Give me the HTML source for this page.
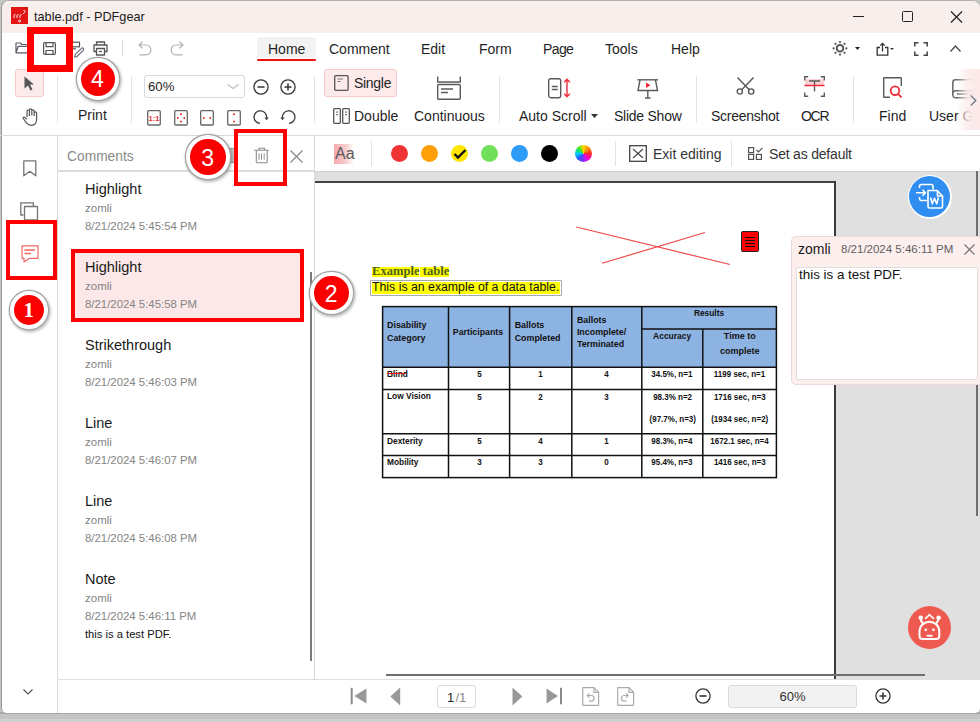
<!DOCTYPE html>
<html><head><meta charset="utf-8">
<style>
*{margin:0;padding:0;box-sizing:border-box}
html,body{width:980px;height:722px;overflow:hidden;background:#c4c4c4;font-family:"Liberation Sans",sans-serif;color:#1f1f1f;position:relative}
.a{position:absolute}
.t{position:absolute;white-space:nowrap;line-height:1}
.sep{position:absolute;width:1px;background:#e3e3e3}
.hl{position:absolute;height:1px;background:#e6e6e6}
svg{position:absolute;overflow:visible}
.badge{position:absolute;border-radius:50%;background:#fb0000;border:4px solid #fff;box-shadow:0 0 0.5px 1.3px #a4a4a4,1px 1.5px 3px 1.5px rgba(0,0,0,.28);color:#fff;text-align:center;line-height:1}
.rbox{position:absolute;border:4px solid #ff0000}
.tab{font-size:14px;color:#1f1f1f}
.lbl{font-size:14px;color:#1f1f1f}
.ci{position:absolute;width:17px;height:17px;border-radius:50%;top:145px}
.it{font-size:14.5px;color:#1a1a1a}
.iu{font-size:11.5px;color:#848484}
.id{font-size:11.4px;color:#848484}
.tb{font-size:9px;font-weight:bold;color:#111}
</style></head><body>
<!-- window frame -->
<div class="a" style="left:0;top:712px;width:980px;height:2px;background:#a8a8a8"></div>
<div class="a" style="left:0;top:719px;width:980px;height:3px;background:#d0d0d0"></div>
<div class="a" style="left:1px;top:0;width:979px;height:713px;background:#fff;border-radius:8px 8px 5px 5px;border-left:1px solid #9a9a9a;border-top:1px solid #b0b0b0;overflow:hidden">
  <div class="a" style="left:0;top:0;width:980px;height:32px;background:#f8eeec"></div>
</div>

<!-- ============ TITLE BAR ============ -->
<div class="a" style="left:11px;top:7px;width:17px;height:17px;background:#e21414"></div>
<svg style="left:11px;top:7px" width="17" height="17"><g fill="none" stroke="#fff" stroke-width="0.9"><path d="M3 11V8.2c.4-.6 1-.7 1.5-.5M6 11V8.2c.4-.6 1-.7 1.5-.5M9 11V8.2c.4-.6 1-.7 1.5-.5"/><path d="M12.5 3.5c1.2-.3 2 .5 1.6 1.5-.4.9-1.5 1.3-2.3 2"/><circle cx="8.5" cy="14" r="1"/></g></svg>
<div class="t" style="left:34px;top:11px;font-size:12.7px;color:#1a1a1a">table.pdf - PDFgear</div>
<div class="a" style="left:853px;top:16px;width:11px;height:1.2px;background:#222"></div>
<div class="a" style="left:902px;top:11px;width:10.5px;height:10.5px;border:1.6px solid #222;border-radius:1.5px"></div>
<svg style="left:950px;top:10.5px" width="13" height="12"><path d="M1 0.5 L12 11.5 M12 0.5 L1 11.5" stroke="#222" stroke-width="1.2"/></svg>

<!-- ============ ROW 1 : quick access + tabs ============ -->
<svg style="left:15px;top:42px" width="16" height="13"><path d="M1 10.8V1h4.3l1.5 1.5h6.5V3.6M1 10.8l2.3-6.5h12L13 10.8z" fill="none" stroke="#5a5a6a" stroke-width="1.2" stroke-linejoin="round"/></svg>
<svg style="left:43px;top:42px" width="13" height="13"><g fill="none" stroke="#555" stroke-width="1.2"><rect x="0.6" y="0.6" width="11.8" height="11.8" rx="1.2"/><path d="M3 0.6v4h7v-4M3 12.4V8.5h7v3.9"/></g></svg>
<svg style="left:70px;top:40px" width="14" height="17"><g fill="none" stroke="#555" stroke-width="1.2"><rect x="0" y="2.2" width="9.5" height="4.6"/><path d="M0 8.8h6"/><path d="M5.2 14.6l6.3-6.3a1.3 1.3 0 0 1 1.9 1.9l-6.3 6.3-2.4.6z" stroke="#667" stroke-width="1.1"/></g></svg>
<svg style="left:93px;top:41px" width="15" height="15"><g fill="none" stroke="#555" stroke-width="1.3" stroke-linejoin="round"><path d="M3.5 4V1h8v3"/><path d="M3.5 10.5H1V4h13v6.5h-2.5"/><rect x="3.5" y="7.5" width="8" height="6.5"/><path d="M6 10.5h3"/></g></svg>
<div class="sep" style="left:122px;top:40px;height:16px;background:#dcdcdc"></div>
<svg style="left:138px;top:41px" width="14" height="15"><path d="M4.5 0.8L1 4l3.5 3.2M1 4h7a4.5 4.5 0 0 1 0 9.8H1.5" fill="none" stroke="#b2b2b2" stroke-width="1.2"/></svg>
<svg style="left:170px;top:41px" width="14" height="15"><path d="M9.5 0.8L13 4l-3.5 3.2M13 4H6a4.5 4.5 0 0 0 0 9.8h6.5" fill="none" stroke="#b2b2b2" stroke-width="1.2"/></svg>

<div class="a" style="left:257px;top:37px;width:59px;height:21px;background:#f3f3f3;border-radius:4px 4px 0 0"></div>
<div class="a" style="left:257px;top:59px;width:59px;height:2px;background:#f01010;border-radius:1px"></div>
<div class="t tab" style="left:268px;top:42px">Home</div>
<div class="t tab" style="left:329px;top:42px">Comment</div>
<div class="t tab" style="left:421px;top:42px">Edit</div>
<div class="t tab" style="left:479px;top:42px">Form</div>
<div class="t tab" style="left:543px;top:42px;letter-spacing:-0.6px">Page</div>
<div class="t tab" style="left:605px;top:42px">Tools</div>
<div class="t tab" style="left:671px;top:42px">Help</div>

<svg style="left:832px;top:41px" width="16" height="15"><g fill="#555"><circle cx="8" cy="7.3" r="3.3" fill="none" stroke="#555" stroke-width="1.9"/><circle cx="8" cy="1" r="1.1"/><circle cx="8" cy="13.6" r="1.1"/><circle cx="1.6" cy="7.3" r="1.1"/><circle cx="14.4" cy="7.3" r="1.1"/><circle cx="3.5" cy="2.8" r="1.1"/><circle cx="12.5" cy="2.8" r="1.1"/><circle cx="3.5" cy="11.8" r="1.1"/><circle cx="12.5" cy="11.8" r="1.1"/></g></svg>
<svg style="left:855px;top:47px" width="5" height="3"><path d="M0 0h5l-2.5 3z" fill="#222"/></svg>
<svg style="left:876px;top:42px" width="13" height="14"><g fill="none" stroke="#333" stroke-width="1.3"><path d="M4 5.5H1.2v7.6h10.6V5.5H9"/><path d="M6.5 9.5V1.5M4.2 3.6l2.3-2.3 2.3 2.3"/></g></svg>
<svg style="left:890px;top:48px" width="4" height="2"><path d="M0 0h4l-2 2z" fill="#333"/></svg>
<svg style="left:914px;top:42px" width="14" height="14"><path d="M0.8 4.5V0.8h3.7M9.5 0.8h3.7v3.7M13.2 9.5v3.7H9.5M4.5 13.2H0.8V9.5" fill="none" stroke="#444" stroke-width="1.5"/></svg>
<svg style="left:950px;top:45px" width="11" height="7"><path d="M0.5 6.5L5.5 1l5 5.5" fill="none" stroke="#444" stroke-width="1.2"/></svg>

<!-- ============ ROW 2 : ribbon ============ -->
<div class="a" style="left:15px;top:69px;width:29px;height:28px;background:#fdeaea;border:1px solid #f7caca;border-radius:3px"></div>
<svg style="left:24px;top:76px" width="11" height="15"><path d="M0.5 0.5L10 8.5H6l2.5 5-2 1-2.5-5L0.5 12.5z" fill="#555"/></svg>
<svg style="left:22px;top:108px" width="17" height="18"><path d="M5 9V3.2a1.2 1.2 0 0 1 2.4 0V8M7.4 7.5V2a1.2 1.2 0 0 1 2.4 0v5.5M9.8 7.5V3a1.2 1.2 0 0 1 2.4 0v5M12.2 8V5a1.2 1.2 0 0 1 2.4 0v6.5c0 3.5-2.2 5.8-5.5 5.8-2.2 0-3.6-1-4.8-2.6L1.2 10.5c-.5-.8.4-1.8 1.3-1.2L5 11.2" fill="none" stroke="#555" stroke-width="1.2" stroke-linejoin="round"/></svg>
<div class="sep" style="left:57px;top:76px;height:47px"></div>
<div class="t lbl" style="left:78px;top:108px">Print</div>
<div class="sep" style="left:131px;top:76px;height:47px"></div>

<div class="a" style="left:144px;top:75px;width:101px;height:23px;border:1px solid #d9d9d9;border-radius:3px"></div>
<div class="t" style="left:148px;top:80px;font-size:13.2px">60%</div>
<svg style="left:227px;top:84px" width="12" height="5"><path d="M0.5 0.5l5.5 4 5.5-4" fill="none" stroke="#bdbdbd" stroke-width="1.1"/></svg>
<svg style="left:253px;top:79px" width="16" height="16"><circle cx="8" cy="8" r="7.1" fill="none" stroke="#333" stroke-width="1.3"/><path d="M4.5 8h7" stroke="#333" stroke-width="1.5"/></svg>
<svg style="left:280px;top:79px" width="16" height="16"><circle cx="8" cy="8" r="7.1" fill="none" stroke="#333" stroke-width="1.3"/><path d="M4.5 8h7M8 4.5v7" stroke="#333" stroke-width="1.5"/></svg>

<svg style="left:147px;top:110px" width="14" height="16"><rect x="0.7" y="0.7" width="12.6" height="14.3" rx="1" fill="none" stroke="#666" stroke-width="1.3"/><text x="7" y="11" font-size="7.5" font-family="Liberation Sans" font-weight="bold" fill="#f03030" text-anchor="middle">1:1</text></svg>
<svg style="left:174px;top:110px" width="14" height="16"><rect x="0.7" y="0.7" width="12.6" height="14.3" rx="1" fill="none" stroke="#666" stroke-width="1.3"/><g fill="#f03030"><rect x="6" y="3.5" width="2" height="1.5"/><rect x="6" y="10.8" width="2" height="1.5"/><rect x="3" y="7" width="1.5" height="2"/><rect x="9.5" y="7" width="1.5" height="2"/></g></svg>
<svg style="left:200px;top:110px" width="14" height="16"><rect x="0.7" y="0.7" width="12.6" height="14.3" rx="1" fill="none" stroke="#666" stroke-width="1.3"/><g fill="#f03030"><rect x="3" y="7" width="1.5" height="2"/><rect x="9.5" y="7" width="1.5" height="2"/></g></svg>
<svg style="left:227px;top:110px" width="14" height="16"><rect x="0.7" y="0.7" width="12.6" height="14.3" rx="1" fill="none" stroke="#666" stroke-width="1.3"/><g fill="#f03030"><rect x="6" y="3.5" width="2" height="1.5"/><rect x="6" y="10.8" width="2" height="1.5"/></g></svg>
<svg style="left:253px;top:110px" width="16" height="15"><path d="M7 13.4A6.3 6.3 0 1 1 13.6 7.8" fill="none" stroke="#444" stroke-width="1.4"/><path d="M11.4 7.6h4.4l-2.2 2.6z" fill="#444"/></svg>
<svg style="left:281px;top:110px" width="16" height="15"><path d="M8 13.4A6.3 6.3 0 1 0 1.4 7.8" fill="none" stroke="#444" stroke-width="1.4"/><path d="M-0.8 7.6h4.4L1.4 10.2z" fill="#444"/></svg>
<div class="sep" style="left:314px;top:76px;height:47px"></div>

<div class="a" style="left:324px;top:69px;width:73px;height:28px;background:#fdeaea;border:1px solid #f7caca;border-radius:3px"></div>
<svg style="left:334px;top:75px" width="15" height="16"><rect x="0.7" y="0.7" width="13.4" height="14.6" rx="1" fill="none" stroke="#555" stroke-width="1.3"/><path d="M3.5 4h5.5M3.5 6.5h3" stroke="#777" stroke-width="1.2"/></svg>
<div class="t lbl" style="left:354px;top:76px;letter-spacing:-0.3px">Single</div>
<svg style="left:333px;top:108px" width="17" height="16"><g fill="none" stroke="#555" stroke-width="1.3"><rect x="0.7" y="0.7" width="6.6" height="14.6" rx="0.8"/><rect x="9.7" y="0.7" width="6.6" height="14.6" rx="0.8"/></g><g fill="#777"><rect x="3" y="3.5" width="2" height="1.2"/><rect x="3" y="6" width="2" height="1.2"/><rect x="12" y="3.5" width="2" height="1.2"/><rect x="12" y="6" width="2" height="1.2"/></g></svg>
<div class="t lbl" style="left:354px;top:109px">Double</div>
<svg style="left:437px;top:76px" width="24" height="24"><g fill="none" stroke="#5a5a5a" stroke-width="1.4"><path d="M0.7 0.5v5.5h22.6V0.5"/><rect x="0.7" y="8.5" width="22.6" height="14.8" rx="1"/><path d="M4 13h12M4 16.5h7"/></g></svg>
<div class="t lbl" style="left:414px;top:109px">Continuous</div>
<div class="sep" style="left:499px;top:76px;height:47px"></div>

<svg style="left:548px;top:78px" width="24" height="21"><rect x="0.7" y="0.7" width="12" height="19" rx="2" fill="none" stroke="#5a5a5a" stroke-width="1.4"/><path d="M3.8 8.5h6M3.8 11.5h6" stroke="#5a5a5a" stroke-width="1.3"/><path d="M19 1.5v17M16.2 4.2L19 1.2l2.8 3M16.2 15.8L19 18.8l2.8-3" fill="none" stroke="#f02a3a" stroke-width="1.4"/></svg>
<div class="t lbl" style="left:519px;top:109px">Auto Scroll</div>
<svg style="left:591px;top:114px" width="7" height="4"><path d="M0 0h7l-3.5 4z" fill="#333"/></svg>
<svg style="left:637px;top:79px" width="22" height="21"><g fill="none" stroke="#5a5a5a" stroke-width="1.4"><path d="M0.5 0.8h20.5"/><path d="M3 1l-2 10.5h19.5l-2-10.5"/><path d="M10.8 11.5v7M8 19h5.5"/></g><path d="M9 3.5l4.5 2.8L9 9z" fill="#f02a3a"/></svg>
<div class="t lbl" style="left:614px;top:109px;letter-spacing:-0.25px">Slide Show</div>
<div class="sep" style="left:696px;top:76px;height:47px"></div>

<svg style="left:736px;top:77px" width="19" height="18"><g fill="none" stroke="#555" stroke-width="1.4"><path d="M1.5 0.5l11.5 12M17.5 0.5L6 12.5"/><circle cx="3.8" cy="14.5" r="2.6"/><circle cx="15.2" cy="14.5" r="2.6"/></g></svg>
<div class="t lbl" style="left:711px;top:109px;letter-spacing:-0.28px">Screenshot</div>
<svg style="left:804px;top:76px" width="21" height="21"><rect x="1" y="3" width="19" height="6.5" fill="#fbd3d5"/><g fill="none" stroke="#5a5a5a" stroke-width="1.4"><path d="M0.7 4.5V0.7h3.5M16.8 0.7h3.5v3.8M20.3 16.5v3.8h-3.5M4.2 20.3H0.7v-3.8"/><path d="M5 5h11M10.5 5v10.5"/></g><path d="M0.5 9.5h20" stroke="#f02a3a" stroke-width="1.5"/></svg>
<div class="t lbl" style="left:801px;top:109px;letter-spacing:-1.3px">OCR</div>
<div class="sep" style="left:853px;top:76px;height:47px"></div>

<svg style="left:883px;top:77px" width="20" height="22"><path d="M7 20.3H1.2a0.5 0.5 0 0 1-.5-.5V1.2a.5.5 0 0 1 .5-.5h16.6a.5.5 0 0 1 .5.5V9" fill="none" stroke="#5a5a5a" stroke-width="1.4"/><circle cx="12" cy="13.7" r="4.3" fill="none" stroke="#f02a3a" stroke-width="1.8"/><path d="M15 16.8l3.5 3.5" stroke="#f02a3a" stroke-width="1.8"/></svg>
<div class="t lbl" style="left:879px;top:109px">Find</div>
<svg style="left:952px;top:79px" width="24" height="19"><g fill="none" stroke="#6a6a6a" stroke-width="1.5"><path d="M23 0.8H3.5a2.7 2.7 0 0 0-2.7 2.7v12.5a2.7 2.7 0 0 0 2.7 2.7H23"/><path d="M0.8 14a2.7 2.7 0 0 1 2.7-2.3H23M5 15h18"/></g></svg>
<div class="t lbl" style="left:929px;top:109px">User G</div>
<div class="a" style="left:957px;top:69px;width:23px;height:61px;background:linear-gradient(90deg,rgba(253,238,238,0) 0,rgba(253,236,236,.85) 10px,#fce9e9 18px,#fce9e9 100%)"></div>
<svg style="left:970px;top:95px" width="7" height="11"><path d="M0.8 0.5l5 5-5 5" fill="none" stroke="#6b7a8c" stroke-width="1.3"/></svg>
<div class="hl" style="left:0;top:135px;width:980px;background:#dcdcdc"></div>

<!-- ============ SIDEBAR ============ -->
<div class="sep" style="left:57px;top:136px;height:577px;background:#d9d9d9"></div>
<svg style="left:23px;top:160px" width="14" height="17"><path d="M0.8 0.8h12v15l-6-4.5-6 4.5z" fill="none" stroke="#747474" stroke-width="1.3" stroke-linejoin="round"/></svg>
<svg style="left:20px;top:202px" width="19" height="19"><g fill="none" stroke="#747474" stroke-width="1.3"><path d="M3.5 13H0.8V0.8h12.5V4"/><rect x="4.5" y="4.5" width="13" height="13.5" rx="0.5" fill="#fff"/></g></svg>
<svg style="left:21px;top:245px" width="18" height="18"><path d="M1 0.8h16v12.5H8.5L3 17v-3.7H1z" fill="none" stroke="#f06868" stroke-width="1.2" stroke-linejoin="round"/><path d="M3.5 5h10.5M3.5 8.5h6.5" stroke="#f06868" stroke-width="1.3"/></svg>
<svg style="left:23px;top:689px" width="10" height="6"><path d="M0.5 0.5l4.5 4.5 4.5-4.5" fill="none" stroke="#555" stroke-width="1.2"/></svg>

<!-- ============ COMMENTS PANEL ============ -->
<div class="t" style="left:67px;top:150px;font-size:13.8px;color:#8a8a8a">Comments</div>
<div class="a" style="left:228px;top:148px;width:7px;height:15px;background:#c4c4c4;border:1.5px solid #9a9a9a"></div>
<svg style="left:254px;top:147px" width="16" height="16"><g fill="none" stroke="#8a8a8a" stroke-width="1.1"><path d="M0.2 3.3h14.6M5 3.3V1.2h5.5v2.1"/><path d="M2.3 3.3v11.5a.9.9 0 0 0 .9.9h9.1a.9.9 0 0 0 .9-.9V3.3"/><path d="M5 6.3v6.5M7.5 6.3v6.5M10.2 6.3v6.5" stroke-width="0.9"/></g></svg>
<svg style="left:290px;top:150px" width="13" height="13"><path d="M0.5 0.5l12 12M12.5 0.5l-12 12" stroke="#888" stroke-width="1.2"/></svg>
<div class="hl" style="left:58px;top:170px;width:257px;height:1.5px;background:#dcdcdc"></div>
<div class="sep" style="left:314px;top:136px;height:543px;background:#d9d9d9"></div>
<div class="a" style="left:310px;top:272px;width:2px;height:389px;background:#7a7a7a"></div>

<div class="a" style="left:75px;top:252px;width:225px;height:66px;background:#fce8e8"></div>
<div id="items">
<div class="t it" style="left:85px;top:182px">Highlight</div>
<div class="t iu" style="left:85px;top:203px">zomli</div>
<div class="t id" style="left:85px;top:221px">8/21/2024 5:45:54 PM</div>
<div class="t it" style="left:85px;top:260px">Highlight</div>
<div class="t iu" style="left:85px;top:281px">zomli</div>
<div class="t id" style="left:85px;top:299px">8/21/2024 5:45:58 PM</div>
<div class="t it" style="left:85px;top:338px">Strikethrough</div>
<div class="t iu" style="left:85px;top:359px">zomli</div>
<div class="t id" style="left:85px;top:377px">8/21/2024 5:46:03 PM</div>
<div class="t it" style="left:85px;top:416px">Line</div>
<div class="t iu" style="left:85px;top:437px">zomli</div>
<div class="t id" style="left:85px;top:455px">8/21/2024 5:46:07 PM</div>
<div class="t it" style="left:85px;top:494px">Line</div>
<div class="t iu" style="left:85px;top:515px">zomli</div>
<div class="t id" style="left:85px;top:533px">8/21/2024 5:46:08 PM</div>
<div class="t it" style="left:85px;top:572px">Note</div>
<div class="t iu" style="left:85px;top:593px">zomli</div>
<div class="t id" style="left:85px;top:611px">8/21/2024 5:46:11 PM</div>
<div class="t" style="left:85px;top:629px;font-size:11.2px;color:#111">this is a test PDF.</div>
</div>

<!-- ============ ROW 3 : comment props bar ============ -->
<div class="a" style="left:334px;top:144px;width:20px;height:20px;background:linear-gradient(90deg,#f7a9ad 0,#f8c9cb 55%,rgba(255,255,255,0) 100%)"></div>
<div class="t" style="left:335px;top:146px;font-size:16px;color:#5a5a5a">Aa</div>
<div class="sep" style="left:371px;top:141px;height:25px"></div>
<div class="ci" style="left:391px;background:#f03434"></div>
<div class="ci" style="left:421px;background:#ff9f0a"></div>
<div class="ci" style="left:451px;background:#ffe600"></div>
<svg style="left:453px;top:148px" width="14" height="12"><path d="M1.5 6l3.5 3.5L12.5 2" fill="none" stroke="#111" stroke-width="2.4"/></svg>
<div class="ci" style="left:481px;background:#70e05a"></div>
<div class="ci" style="left:511px;background:#2e9cf6"></div>
<div class="ci" style="left:541px;background:#000"></div>
<div class="ci" style="left:575px;background:conic-gradient(from 0deg,#ffd800,#ff8a00,#ff2a2a,#ff00c8,#8a2cff,#2a5cff,#00d0ff,#30e830,#ffd800)"></div>
<div class="sep" style="left:615px;top:141px;height:25px"></div>
<svg style="left:629px;top:145px" width="18" height="17"><rect x="0.7" y="0.7" width="16.6" height="15.6" fill="none" stroke="#444" stroke-width="1.3"/><path d="M4 4l10 9M14 4L4 13" stroke="#444" stroke-width="1.1"/></svg>
<div class="t lbl" style="left:653px;top:147px;color:#333">Exit editing</div>
<div class="sep" style="left:731px;top:141px;height:25px"></div>
<svg style="left:748px;top:147px" width="15" height="13"><g fill="none" stroke="#555" stroke-width="1.2"><rect x="0.6" y="0.6" width="5" height="5"/><rect x="0.6" y="7.4" width="5" height="5"/><rect x="8.4" y="7.4" width="5" height="5"/><path d="M8.5 3l2 2 4-4.2"/></g></svg>
<div class="t lbl" style="left:769px;top:147px;letter-spacing:-0.2px;color:#333">Set as default</div>

<!-- ============ DOC AREA ============ -->
<div class="a" style="left:315px;top:171px;width:665px;height:508px;background:#e0e0e0;border-top:1px solid #d2d2d2"></div>
<div class="a" style="left:315px;top:181px;width:521px;height:498px;background:#fff"></div>
<div class="a" style="left:315px;top:181px;width:521px;height:2px;background:#444"></div>
<div class="a" style="left:834px;top:181px;width:2px;height:498px;background:#3a3a3a"></div>
<div class="a" style="left:976px;top:171px;width:2px;height:345px;background:#6e6e6e"></div>
<div class="a" style="left:386px;top:674px;width:539px;height:2px;background:#6e6e6e"></div>

<!-- red cross lines -->
<svg style="left:0;top:0" width="980" height="722"><path d="M576.3 227L730 264.5M602 263.3L705 232.5" stroke="#f04848" stroke-width="1.2" fill="none"/></svg>
<!-- note icon -->
<div class="a" style="left:741px;top:231px;width:18px;height:21px;background:#ff0000;border:1px solid #222;border-radius:1.5px"></div>
<div class="a" style="left:745px;top:237px;width:10px;height:1.2px;background:#111;box-shadow:0 3px 0 #111,0 6px 0 #111,0 9px 0 #111"></div>

<!-- heading + sentence -->
<div class="a" style="left:372px;top:267px;width:47px;height:9.5px;background:#ffff00"></div>
<div class="a" style="left:420px;top:267px;width:29px;height:9.5px;background:#ffff00"></div>
<div class="t" style="left:372px;top:265px;font-family:'Liberation Serif',serif;font-weight:bold;font-size:12.6px;color:#4b5e1e;letter-spacing:0px">Example table</div>
<div class="a" style="left:369.5px;top:279.5px;width:192.5px;height:16.5px;border:1.5px solid #a9a9a9;border-radius:1px"></div>
<div class="a" style="left:372px;top:281.5px;width:188px;height:12.8px;background:#ffff00"></div>
<div class="t" style="left:372px;top:281px;font-size:12.3px;color:#111">This is an example of a data table.</div>

<!-- table -->
<div class="a" style="left:383px;top:307px;width:393px;height:60px;background:#8db3e2"></div>
<svg style="left:0;top:0" width="980" height="722"><g stroke="#111" stroke-width="1.5" fill="none">
<rect x="382.6" y="306.6" width="393.8" height="171"/>
<path d="M448.5 306.6V477.6M509.6 306.6V477.6M571.8 306.6V477.6M641.8 306.6V477.6M702.8 328.9V477.6"/>
<path d="M641.8 328.9H776.4M382.6 367.2H776.4M382.6 389.6H776.4M382.6 433.8H776.4M382.6 455.5H776.4"/>
</g></svg>
<div class="t tb" style="left:387px;top:321.3px;font-size:8.9px">Disability</div>
<div class="t tb" style="left:387px;top:334.2px;font-size:8.9px">Category</div>
<div class="t tb" style="left:452.8px;top:327.5px;font-size:8.8px">Participants</div>
<div class="t tb" style="left:514.7px;top:321.3px;font-size:8.9px">Ballots</div>
<div class="t tb" style="left:514.7px;top:334.2px;font-size:8.9px">Completed</div>
<div class="t tb" style="left:576.9px;top:315.5px;font-size:8.9px">Ballots</div>
<div class="t tb" style="left:576.9px;top:327.8px;font-size:8.9px">Incomplete/</div>
<div class="t tb" style="left:576.9px;top:340px;font-size:8.9px">Terminated</div>
<div class="t tb" style="left:693.9px;top:309.1px;font-size:8.4px">Results</div>
<div class="t tb" style="left:653.1px;top:332px;font-size:8.45px">Accuracy</div>
<div class="t tb" style="left:723.8px;top:332px;font-size:9px">Time to</div>
<div class="t tb" style="left:720px;top:347px;font-size:9px">complete</div>

<div class="t tb" style="left:387px;top:370px;font-size:8.9px;transform:scaleX(.94);transform-origin:0 0">Blind</div>
<div class="a" style="left:387px;top:373px;width:18.5px;height:1.3px;background:#ee1a1a"></div>
<div class="t tb" style="left:387px;top:392px;font-size:8.9px;transform:scaleX(.94);transform-origin:0 0">Low Vision</div>
<div class="t tb" style="left:387px;top:436.5px;font-size:8.9px;transform:scaleX(.94);transform-origin:0 0">Dexterity</div>
<div class="t tb" style="left:387px;top:457.7px;font-size:8.9px;transform:scaleX(.94);transform-origin:0 0">Mobility</div>
<div style="position:absolute;left:448.5px;top:0;width:61px" class="cc">
</div>
<div class="t tb" style="left:448.5px;top:370.0px;width:61.1px;text-align:center;font-size:8.9px"><span style="display:inline-block;transform:scaleX(.9)">5</span></div>
<div class="t tb" style="left:509.6px;top:370.0px;width:62.2px;text-align:center;font-size:8.9px"><span style="display:inline-block;transform:scaleX(.9)">1</span></div>
<div class="t tb" style="left:571.8px;top:370.0px;width:70.0px;text-align:center;font-size:8.9px"><span style="display:inline-block;transform:scaleX(.9)">4</span></div>
<div class="t tb" style="left:641.8px;top:370.0px;width:61.0px;text-align:center;font-size:8.9px"><span style="display:inline-block;transform:scaleX(.9)">34.5%, n=1</span></div>
<div class="t tb" style="left:702.8px;top:370.0px;width:73.6px;text-align:center;font-size:8.9px"><span style="display:inline-block;transform:scaleX(.9)">1199 sec, n=1</span></div>
<div class="t tb" style="left:448.5px;top:392.5px;width:61.1px;text-align:center;font-size:8.9px"><span style="display:inline-block;transform:scaleX(.9)">5</span></div>
<div class="t tb" style="left:509.6px;top:392.5px;width:62.2px;text-align:center;font-size:8.9px"><span style="display:inline-block;transform:scaleX(.9)">2</span></div>
<div class="t tb" style="left:571.8px;top:392.5px;width:70.0px;text-align:center;font-size:8.9px"><span style="display:inline-block;transform:scaleX(.9)">3</span></div>
<div class="t tb" style="left:641.8px;top:392.5px;width:61.0px;text-align:center;font-size:8.9px"><span style="display:inline-block;transform:scaleX(.9)">98.3% n=2</span></div>
<div class="t tb" style="left:702.8px;top:392.5px;width:73.6px;text-align:center;font-size:8.9px"><span style="display:inline-block;transform:scaleX(.9)">1716 sec, n=3</span></div>
<div class="t tb" style="left:641.8px;top:415.0px;width:61.0px;text-align:center;font-size:8.9px"><span style="display:inline-block;transform:scaleX(.9)">(97.7%, n=3)</span></div>
<div class="t tb" style="left:702.8px;top:415.0px;width:73.6px;text-align:center;font-size:8.9px"><span style="display:inline-block;transform:scaleX(.9)">(1934 sec, n=2)</span></div>
<div class="t tb" style="left:448.5px;top:436.5px;width:61.1px;text-align:center;font-size:8.9px"><span style="display:inline-block;transform:scaleX(.9)">5</span></div>
<div class="t tb" style="left:509.6px;top:436.5px;width:62.2px;text-align:center;font-size:8.9px"><span style="display:inline-block;transform:scaleX(.9)">4</span></div>
<div class="t tb" style="left:571.8px;top:436.5px;width:70.0px;text-align:center;font-size:8.9px"><span style="display:inline-block;transform:scaleX(.9)">1</span></div>
<div class="t tb" style="left:641.8px;top:436.5px;width:61.0px;text-align:center;font-size:8.9px"><span style="display:inline-block;transform:scaleX(.9)">98.3%, n=4</span></div>
<div class="t tb" style="left:702.8px;top:436.5px;width:73.6px;text-align:center;font-size:8.9px"><span style="display:inline-block;transform:scaleX(.9)">1672.1 sec, n=4</span></div>
<div class="t tb" style="left:448.5px;top:457.7px;width:61.1px;text-align:center;font-size:8.9px"><span style="display:inline-block;transform:scaleX(.9)">3</span></div>
<div class="t tb" style="left:509.6px;top:457.7px;width:62.2px;text-align:center;font-size:8.9px"><span style="display:inline-block;transform:scaleX(.9)">3</span></div>
<div class="t tb" style="left:571.8px;top:457.7px;width:70.0px;text-align:center;font-size:8.9px"><span style="display:inline-block;transform:scaleX(.9)">0</span></div>
<div class="t tb" style="left:641.8px;top:457.7px;width:61.0px;text-align:center;font-size:8.9px"><span style="display:inline-block;transform:scaleX(.9)">95.4%, n=3</span></div>
<div class="t tb" style="left:702.8px;top:457.7px;width:73.6px;text-align:center;font-size:8.9px"><span style="display:inline-block;transform:scaleX(.9)">1416 sec, n=3</span></div>

<!-- popup note -->
<div class="a" style="left:790.5px;top:235.5px;width:200px;height:149px;background:#fcefee;border:1px solid #e9d9d9;border-radius:5px"></div>
<div class="t" style="left:798px;top:242px;font-size:14px;color:#1a1a1a">zomli</div>
<div class="t" style="left:841px;top:244px;font-size:11.5px;color:#606060">8/21/2024 5:46:11 PM</div>
<svg style="left:964px;top:244px" width="11" height="11"><path d="M0.5 0.5l10 10M10.5 0.5l-10 10" stroke="#777" stroke-width="1.2"/></svg>
<div class="a" style="left:796px;top:266.5px;width:182px;height:113px;background:#fff;border:1px solid #dedede;border-radius:2px"></div>
<div class="t" style="left:799px;top:268px;font-size:13.4px;color:#111">this is a test PDF.</div>

<!-- floating buttons -->
<div class="a" style="left:907.5px;top:174.5px;width:44px;height:44px;border-radius:50%;background:#fff"></div>
<div class="a" style="left:909px;top:176px;width:41px;height:41px;border-radius:50%;background:#2f8ef0"></div>
<svg style="left:909px;top:176px" width="41" height="41"><g fill="none" stroke="#fff" stroke-width="1.6" stroke-linejoin="round"><path d="M10.5 12V10.5a2 2 0 0 1 2-2h9.5a2 2 0 0 1 2 2v3M10.5 21v1.5a2 2 0 0 0 2 2H18"/><path d="M7 16.8h9.5M13.5 13.8l3 3-3 3"/><path d="M19 14.5h9l5.5 5.5v10.5a1.5 1.5 0 0 1-1.5 1.5H20.5a1.5 1.5 0 0 1-1.5-1.5z"/><path d="M28.5 14.5v5.5h5"/><path d="M21.5 21.5l1.8 6.3 2.2-5.5 2.2 5.5 1.8-6.3"/></g></svg>

<div class="a" style="left:908px;top:606px;width:43px;height:43px;border-radius:50%;background:#ef5a50"></div>
<svg style="left:908px;top:606px" width="43" height="43"><g fill="none" stroke="#fff" stroke-width="2" stroke-linejoin="round" stroke-linecap="round"><path d="M11.5 30V25.2a9.9 9.5 0 0 1 19.8 0V30a3 3 0 0 1-3 3H14.5a3 3 0 0 1-3-3z"/><path d="M15 17.8l-2-3.2M28 17.8l2-3.2"/><path d="M17.5 12.3l2-1.6 2-2.2 2 2.2 2 1.6" stroke-width="1.6"/></g><g fill="#fff"><circle cx="12.8" cy="11.8" r="2.3"/><circle cx="30.6" cy="11.8" r="2.3"/><circle cx="17.8" cy="23.8" r="1.4"/><circle cx="25.4" cy="23.8" r="1.4"/><rect x="18.5" y="28.8" width="6.2" height="1.9" rx="0.9"/></g></svg>

<!-- ============ BOTTOM BAR ============ -->
<div class="hl" style="left:58px;top:679px;width:922px;background:#dedede"></div>
<svg style="left:350px;top:687px" width="18" height="18"><rect x="0.7" y="0.8" width="2" height="16.5" fill="#8a8a8a"/><path d="M16.5 1.5v15L4.3 9z" fill="#999"/></svg>
<svg style="left:390px;top:686.5px" width="11" height="19"><path d="M10.2 0.5v18L0.3 9.5z" fill="#999"/></svg>
<div class="a" style="left:437px;top:685px;width:39px;height:22.5px;border:1px solid #dcdcdc;border-radius:3px;background:#fff"></div>
<div class="t" style="left:447px;top:690.5px;font-size:13px;color:#222">1</div>
<div class="t" style="left:455.5px;top:690.5px;font-size:13px;color:#888">/1</div>
<svg style="left:512px;top:687px" width="11" height="19"><path d="M0.5 0.5v18l9.9-9z" fill="#999"/></svg>
<svg style="left:546px;top:687px" width="17" height="18"><path d="M0.5 1.5v15L12 9z" fill="#999"/><rect x="14" y="0.8" width="2" height="16.5" fill="#8a8a8a"/></svg>
<svg style="left:581.5px;top:687px" width="18" height="19"><g fill="none" stroke="#aaa" stroke-width="1.2"><path d="M0.7 1.2a.5.5 0 0 1 .5-.5h10.8l4.6 4.6v12.5a.5.5 0 0 1-.5.5H1.2a.5.5 0 0 1-.5-.5z"/><path d="M12 0.7v4.6h4.6"/><path d="M5.5 8.5h3.8a2.8 2.8 0 0 1 0 5.6H7M7.5 6.3L5.3 8.5l2.2 2.2"/></g></svg>
<svg style="left:617px;top:687px" width="18" height="19"><g fill="none" stroke="#aaa" stroke-width="1.2"><path d="M0.7 1.2a.5.5 0 0 1 .5-.5h10.8l4.6 4.6v12.5a.5.5 0 0 1-.5.5H1.2a.5.5 0 0 1-.5-.5z"/><path d="M12 0.7v4.6h4.6"/><path d="M11 8.5H7.2a2.8 2.8 0 0 0 0 5.6H9.5M9 6.3l2.2 2.2L9 10.7"/></g></svg>
<svg style="left:694.5px;top:688px" width="16" height="16"><circle cx="8" cy="8" r="7.1" fill="none" stroke="#333" stroke-width="1.3"/><path d="M4.5 8h7" stroke="#333" stroke-width="1.6"/></svg>
<div class="a" style="left:728px;top:684.5px;width:129px;height:23px;border:1px solid #dadada;border-radius:3px;background:#f2f2f2"></div>
<div class="t" style="left:779.5px;top:690px;font-size:13px;color:#333">60%</div>
<svg style="left:874.5px;top:688px" width="16" height="16"><circle cx="8" cy="8" r="7.1" fill="none" stroke="#333" stroke-width="1.3"/><path d="M4.5 8h7M8 4.5v7" stroke="#333" stroke-width="1.6"/></svg>

<!-- ============ ANNOTATION BOXES & BADGES ============ -->
<div class="rbox" style="left:27px;top:27px;width:46px;height:44.5px;border-width:7px"></div>
<div class="rbox" style="left:6px;top:219.5px;width:51px;height:60.5px"></div>
<div class="rbox" style="left:71.2px;top:248.5px;width:232.8px;height:73.5px;border-width:4.4px"></div>
<div class="rbox" style="left:234.3px;top:129.3px;width:53px;height:56.3px;border-width:4.3px"></div>

<div class="badge" style="left:76.5px;top:57.5px;width:42px;height:42px;font-size:23px;padding-top:6px">4</div>
<div class="badge" style="left:9.5px;top:290.5px;width:38.5px;height:38.5px;font-size:21px;padding-top:5.5px;font-family:'Liberation Serif',serif;font-weight:bold">1</div>
<div class="badge" style="left:310px;top:271.5px;width:42.5px;height:42.5px;font-size:23px;padding-top:7.5px">2</div>
<div class="badge" style="left:186px;top:135px;width:43.5px;height:44px;font-size:23px;padding-top:8px">3</div>
</body></html>
